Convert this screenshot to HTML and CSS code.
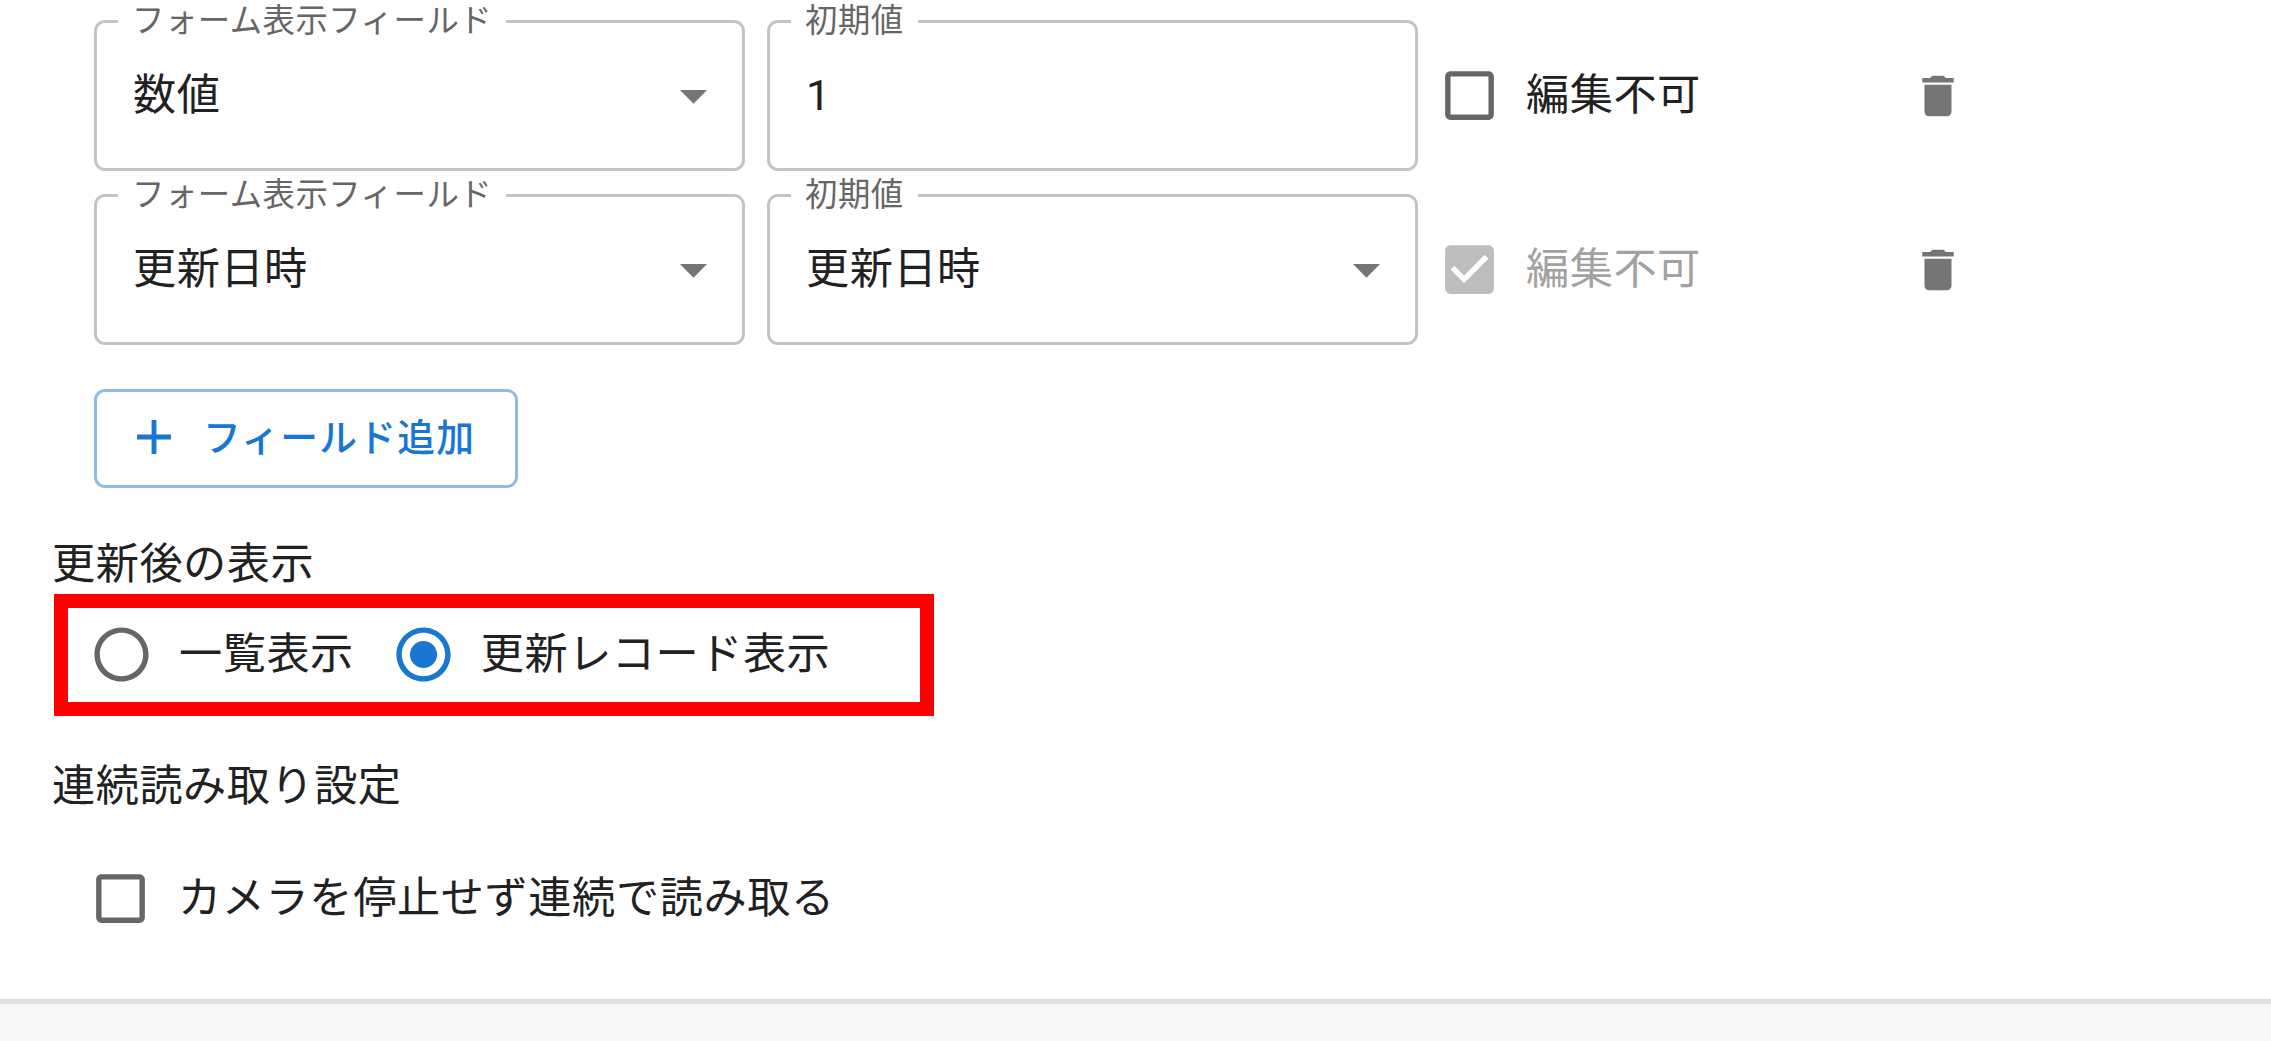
FILE: index.html
```html
<!DOCTYPE html>
<html lang="ja">
<head>
    <meta charset="UTF-8">
    <title>フォーム設定</title>
    <link rel="stylesheet" href="styles.css">
</head>
<body>
    <main class="content">
        <div class="field-row">
            <div class="field">
                <span class="field-label">フォーム表示フィールド</span>
                <span class="field-value">数値</span>
                <svg class="arrow" viewBox="0 0 24 24"><path d="M7 10l5 5 5-5z"/></svg>
            </div>
            <div class="field">
                <span class="field-label">初期値</span>
                <span class="field-value">1</span>
            </div>
            <label class="check-label">
                <svg class="check" viewBox="0 0 24 24"><path d="M19 5v14H5V5h14m0-2H5c-1.11 0-2 .9-2 2v14c0 1.1.89 2 2 2h14c1.1 0 2-.9 2-2V5c0-1.1-.9-2-2-2z"/></svg>
                <span>編集不可</span>
            </label>
            <svg class="trash" viewBox="0 0 24 24"><path d="M6 19c0 1.1.9 2 2 2h8c1.1 0 2-.9 2-2V7H6v12zM19 4h-3.5l-1-1h-5l-1 1H5v2h14V4z"/></svg>
        </div>

        <div class="field-row">
            <div class="field">
                <span class="field-label">フォーム表示フィールド</span>
                <span class="field-value">更新日時</span>
                <svg class="arrow" viewBox="0 0 24 24"><path d="M7 10l5 5 5-5z"/></svg>
            </div>
            <div class="field">
                <span class="field-label">初期値</span>
                <span class="field-value">更新日時</span>
                <svg class="arrow" viewBox="0 0 24 24"><path d="M7 10l5 5 5-5z"/></svg>
            </div>
            <label class="check-label disabled">
                <svg class="check" viewBox="0 0 24 24"><path d="M19 3H5c-1.11 0-2 .9-2 2v14c0 1.1.89 2 2 2h14c1.1 0 2-.9 2-2V5c0-1.1-.9-2-2-2zm-9 14l-5-5 1.41-1.41L10 14.17l7.59-7.59L19 8l-9 9z"/></svg>
                <span>編集不可</span>
            </label>
            <svg class="trash" viewBox="0 0 24 24"><path d="M6 19c0 1.1.9 2 2 2h8c1.1 0 2-.9 2-2V7H6v12zM19 4h-3.5l-1-1h-5l-1 1H5v2h14V4z"/></svg>
        </div>

        <button type="button" class="add-btn">
            <svg class="plus" viewBox="0 0 24 24"><path d="M19 13h-6v6h-2v-6H5v-2h6V5h2v6h6v2z"/></svg>
            <span>フィールド追加</span>
        </button>

        <h2 class="section-title after-title">更新後の表示</h2>
        <div class="radio-box">
            <label class="radio-label">
                <svg class="radio" viewBox="0 0 24 24"><path d="M12 2C6.48 2 2 6.48 2 12s4.48 10 10 10 10-4.48 10-10S17.52 2 12 2zm0 18c-4.42 0-8-3.58-8-8s3.58-8 8-8 8 3.58 8 8-3.58 8-8 8z"/></svg>
                <span>一覧表示</span>
            </label>
            <label class="radio-label">
                <svg class="radio selected" viewBox="0 0 24 24"><path d="M12 2C6.48 2 2 6.48 2 12s4.48 10 10 10 10-4.48 10-10S17.52 2 12 2zm0 18c-4.42 0-8-3.58-8-8s3.58-8 8-8 8 3.58 8 8-3.58 8-8 8z"/><circle cx="12" cy="12" r="5"/></svg>
                <span>更新レコード表示</span>
            </label>
        </div>

        <h2 class="section-title scan-title">連続読み取り設定</h2>
        <label class="check-label scan-check">
            <svg class="check" viewBox="0 0 24 24"><path d="M19 5v14H5V5h14m0-2H5c-1.11 0-2 .9-2 2v14c0 1.1.89 2 2 2h14c1.1 0 2-.9 2-2V5c0-1.1-.9-2-2-2z"/></svg>
            <span>カメラを停止せず連続で読み取る</span>
        </label>
    </main>
    <footer class="footer"></footer>
</body>
</html>
```

FILE: styles.css
```css
* {
    margin: 0;
    padding: 0;
    box-sizing: border-box;
    font-family: Roboto, 'Noto Sans CJK JP', sans-serif;
}

body {
    height: 100vh;
    display: flex;
    flex-direction: column;
    background: #fff;
    color: #212121;
    font-size: 43.2px;
    line-height: 65px;
    letter-spacing: 0.5px;
    overflow: hidden;
}

.content {
    flex: 1;
    padding: 20px 0 0 54px;
}

.footer {
    height: 42px;
    background: #f7f7f7;
    border-top: 5px solid #e0e0e0;
}

/* フィールド行 */
.field-row {
    display: flex;
    align-items: center;
    height: 151px;
    margin: 0 0 23px 40px;
}

.field {
    position: relative;
    flex: none;
    display: flex;
    align-items: center;
    justify-content: space-between;
    width: 651px;
    height: 151px;
    margin-right: 22px;
    padding: 0 16px 0 36px;
    border: 3px solid #c4c4c4;
    border-radius: 11px;
}

.field-label {
    position: absolute;
    top: -22px;
    left: 21px;
    padding: 0 14px;
    background: #fff;
    color: #666;
    font-size: 32.4px;
    line-height: 40px;
    letter-spacing: 0.5px;
}

.arrow {
    width: 65px;
    height: 65px;
    fill: #757575;
}

.check-label {
    display: flex;
    align-items: center;
    gap: 24px;
}

.field-row .check-label {
    width: 474px;
    margin-left: -3px;
}

.check {
    flex: none;
    width: 65px;
    height: 65px;
    fill: #666;
}

.disabled {
    color: #a2a2a2;
}

.disabled .check {
    fill: #bdbdbd;
}

.trash {
    width: 54px;
    height: 54px;
    fill: #757575;
}

.add-btn {
    display: flex;
    align-items: center;
    gap: 20px;
    width: 424px;
    height: 99px;
    margin: 44px 0 0 40px;
    padding: 0 0 4px 28px;
    background: #fff;
    border: 3px solid #8fbbe8;
    border-radius: 11px;
    color: #1976d2;
    font-size: 37.8px;
    font-weight: 500;
    letter-spacing: 1.2px;
}

.add-btn span {
    padding-bottom: 5px;
}

.plus {
    flex: none;
    width: 58px;
    height: 58px;
    fill: #1976d2;
}

.section-title {
    margin-left: -2px;
    font-size: 43.2px;
    font-weight: 400;
    line-height: 65px;
}

.after-title {
    margin-top: 44px;
}

.radio-box {
    display: flex;
    align-items: center;
    gap: 37px;
    width: 880px;
    height: 122px;
    margin-top: -3px;
    padding: 0 0 2px 21px;
    border: 14px solid #f00;
}

.radio-label {
    display: flex;
    align-items: center;
    gap: 25px;
}

.radio {
    flex: none;
    width: 65px;
    height: 65px;
    fill: #666;
}

.radio.selected {
    fill: #1976d2;
}

.scan-title {
    margin-top: 38px;
}

.scan-check {
    margin: 47px 0 0 34px;
    gap: 25px;
}

.scan-check span {
    letter-spacing: 0.6px;
}
```
